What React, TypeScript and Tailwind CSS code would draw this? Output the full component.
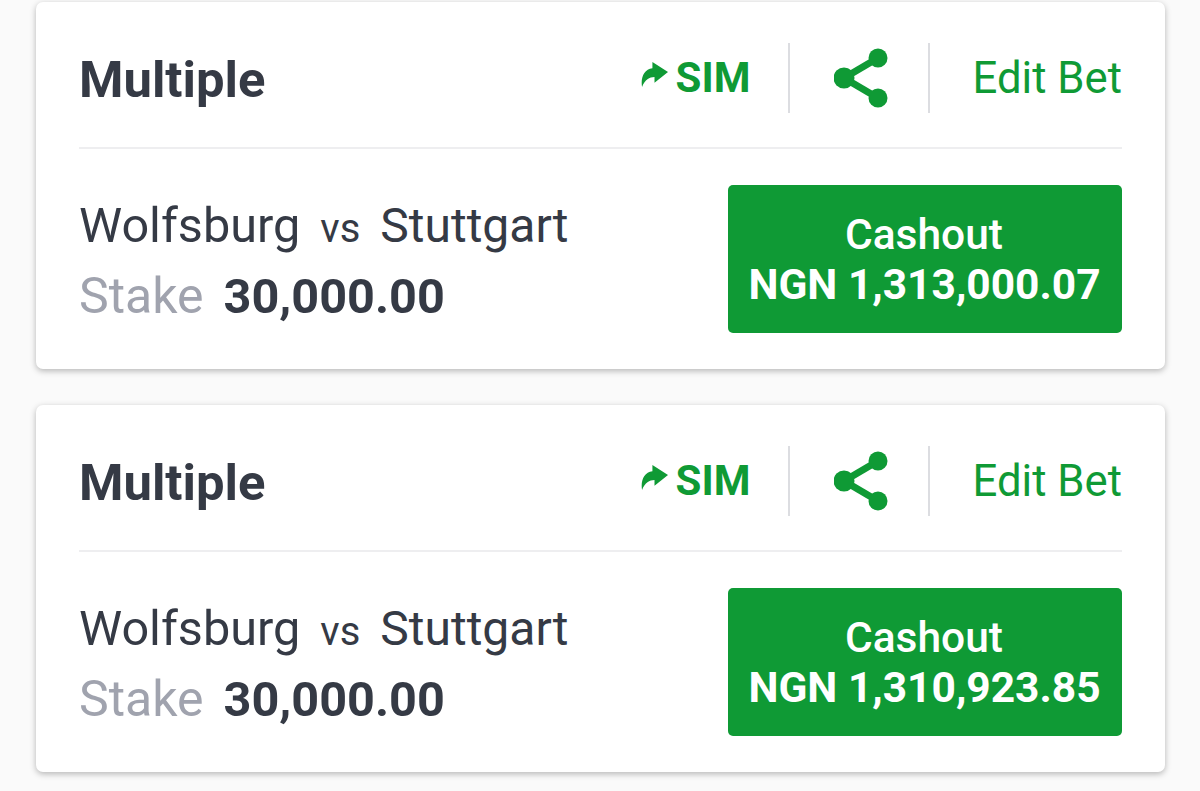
const Card = ({ amount }: { amount: string }) => (
  <div className="h-[367px] bg-white rounded-[7px] shadow-[0_2px_6px_rgba(0,0,0,0.28)] pl-[43px] pr-[43px] text-[#353a45]">
    <div className="h-[147px] flex items-center justify-between border-b-2 border-[#eeeef0]">
      <div className="text-[50.8px] font-bold leading-none mt-[11px]">Multiple</div>
      <div className="flex items-center text-[#0f9a35] h-[70px] mt-[6px]">
        <div className="flex items-center pr-[37px] h-full border-r-2 border-[#dcdde1]">
          <svg width="27" height="25" viewBox="0 0 26 24" className="mr-[8px] mb-[6px]" fill="currentColor">
            <path d="M11 0 L26 9.5 L13 20 L13 14.5 C8 14.5 4 17 1 24 C-0.5 15 3 7 11 6 Z" />
          </svg>
          <span className="text-[42px] font-bold leading-none">SIM</span>
        </div>
        <div className="w-[140px] h-full flex items-center justify-center border-r-2 border-[#dcdde1]">
          <svg width="56" height="60" viewBox="0 0 56 60" fill="currentColor" stroke="currentColor" className="ml-[6px] mt-[1px]">
            <line x1="10" y1="30" x2="44" y2="10" strokeWidth="7" />
            <line x1="10" y1="30" x2="44" y2="50" strokeWidth="7" />
            <circle cx="44" cy="10" r="9.5" stroke="none" />
            <circle cx="44" cy="50" r="9.5" stroke="none" />
            <circle cx="10" cy="30" r="10.5" stroke="none" />
          </svg>
        </div>
        <span className="pl-[43px] text-[43.7px] leading-none mt-[2px]">Edit Bet</span>
      </div>
    </div>
    <div className="flex items-center justify-between mt-[36px]">
      <div className="mt-[6px]">
        <div className="text-[48.6px] leading-none flex items-baseline">
          Wolfsburg<span className="text-[40px] mx-[20px]">vs</span><span className="text-[48px]">Stuttgart</span>
        </div>
        <div className="flex items-baseline mt-[20px] leading-none">
          <span className="text-[50px] text-[#a0a3ae]">Stake</span>
          <span className="text-[48.6px] font-bold ml-[20px]">30,000.00</span>
        </div>
      </div>
      <div className="w-[394px] h-[148px] pt-[2px] bg-[#0f9a35] rounded-[5px] text-white flex flex-col items-center justify-center">
        <div className="text-[42.5px] font-medium leading-[50px] mr-[2px]">Cashout</div>
        <div className="text-[42.5px] font-bold leading-[50px] mr-[1px]">{amount}</div>
      </div>
    </div>
  </div>
);

export default function App() {
  return (
    <div className="min-h-[791px] bg-[#fafafa] pt-[2px] pl-[36px] pr-[35px] flex flex-col gap-[36px] font-['Roboto',sans-serif]">
      <Card amount="NGN 1,313,000.07" />
      <Card amount="NGN 1,310,923.85" />
    </div>
  );
}
